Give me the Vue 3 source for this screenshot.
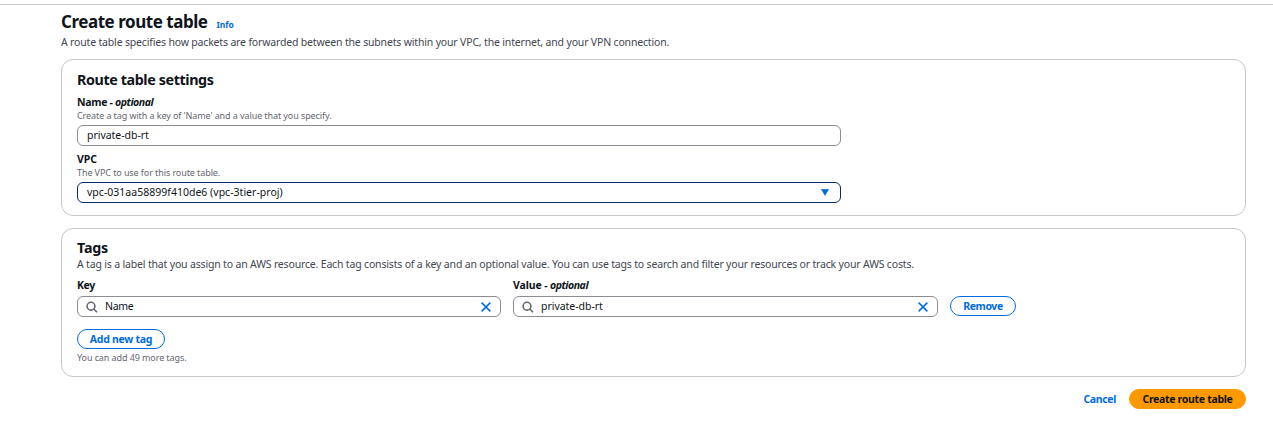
<script setup>
import { ref } from 'vue'

const name = ref('private-db-rt')
const vpc = 'vpc-031aa58899f410de6 (vpc-3tier-proj)'
const tag = ref({ key: 'Name', value: 'private-db-rt' })
</script>

<template>
  <div class="page">
    <header class="page-header">
      <div class="title-row">
        <h1>Create route table</h1>
        <a class="info">Info</a>
      </div>
      <p class="description">A route table specifies how packets are forwarded between the subnets within your VPC, the internet, and your VPN connection.</p>
    </header>

    <section class="card settings">
      <h2>Route table settings</h2>
      <div class="field">
        <label class="label name-label">Name - <i>optional</i></label>
        <p class="hint">Create a tag with a key of 'Name' and a value that you specify.</p>
        <div class="input"><span class="text">{{ name }}</span></div>
      </div>
      <div class="field vpc-field">
        <label class="label vpc-label">VPC</label>
        <p class="hint">The VPC to use for this route table.</p>
        <div class="input select">
          <span class="text vpc-value">{{ vpc }}</span>
          <svg class="caret" width="8" height="7" viewBox="0 0 8 7"><path d="M0.3 0.3h7.4L4 6.4z" fill="#006ce0" stroke="#006ce0" stroke-width=".5" stroke-linejoin="round" /></svg>
        </div>
      </div>
    </section>

    <section class="card tags">
      <h2 class="tags-title">Tags</h2>
      <p class="description">A tag is a label that you assign to an AWS resource. Each tag consists of a key and an optional value. You can use tags to search and filter your resources or track your AWS costs.</p>
      <div class="tag-row">
        <div class="tag-field">
          <label class="label key-label">Key</label>
          <div class="input search">
            <svg class="lens" width="12" height="12" viewBox="0 0 12 12"><circle cx="5" cy="5.2" r="3.9" /><path d="M7.8 8L11 11.2" /></svg>
            <span class="text key-value">{{ tag.key }}</span>
            <svg class="clear" width="10" height="10" viewBox="0 0 10 10"><path d="M.6.6l8.8 8.8M9.4.6L.6 9.4" /></svg>
          </div>
        </div>
        <div class="tag-field value-field">
          <label class="label value-label">Value - <i>optional</i></label>
          <div class="input search">
            <svg class="lens" width="12" height="12" viewBox="0 0 12 12"><circle cx="5" cy="5.2" r="3.9" /><path d="M7.8 8L11 11.2" /></svg>
            <span class="text">{{ tag.value }}</span>
            <svg class="clear" width="10" height="10" viewBox="0 0 10 10"><path d="M.6.6l8.8 8.8M9.4.6L.6 9.4" /></svg>
          </div>
        </div>
        <button class="button remove">Remove</button>
      </div>
      <button class="button add">Add new tag</button>
      <p class="hint">You can add 49 more tags.</p>
    </section>

    <footer class="actions">
      <a class="cancel">Cancel</a>
      <button class="button primary">Create route table</button>
    </footer>
  </div>
</template>

<style>
body {
  background: #fff;
}
</style>

<style scoped>
.page {
  box-sizing: border-box;
  margin-top: 4px;
  height: 435px;
  border-top: 1px solid #c6c6cd;
  padding: 7px 27px 0 61px;
  font: 10.5px/14px "Noto Sans", "Open Sans", sans-serif;
  color: #0f141a;
  overflow: hidden;
}
.page * {
  box-sizing: border-box;
  white-space: nowrap;
}
h1, h2, p {
  margin: 0;
}
.title-row {
  display: flex;
  align-items: baseline;
  height: 23px;
}
h1 {
  width: 155.5px;
  font-size: 17px;
  line-height: 20px;
  letter-spacing: -0.464px;
}
.info {
  color: #006ce0;
  font-size: 8.5px;
  line-height: 12px;
  font-weight: 700;
  letter-spacing: -0.02px;
}
.description {
  color: #424650;
  letter-spacing: -0.172px;
}
.card {
  border: 1px solid #c6c6cd;
  border-radius: 12px;
  padding: 0 15px;
}
.settings {
  height: 157px;
  margin-top: 10px;
  padding-top: 11px;
}
h2 {
  font-size: 14.3px;
  line-height: 18px;
  letter-spacing: -0.39px;
}
.tags-title {
  letter-spacing: -0.2px;
}
.field {
  width: 764px;
  margin-top: 6px;
}
.vpc-field {
  margin-top: 6px;
}
.label {
  display: block;
  font-weight: 700;
  line-height: 14px;
}
.label i {
  letter-spacing: -0.45px;
}
.name-label {
  height: 15px;
  letter-spacing: -0.3px;
}
.vpc-label {
  height: 15px;
}
.value-label {
  letter-spacing: -0.12px;
}
.key-label {
  letter-spacing: -0.45px;
}
.hint {
  color: #656871;
  font-size: 9px;
  line-height: 12px;
  letter-spacing: -0.09px;
}
.input {
  display: flex;
  align-items: center;
  height: 21px;
  border: 1px solid #8c8c94;
  border-radius: 6px;
  padding: 0 9px;
}
.field .input {
  margin-top: 3px;
}
.text {
  padding-bottom: 2px;
  letter-spacing: -0.03px;
}
.select {
  border-color: #002b66;
}
.select .vpc-value {
  letter-spacing: 0.015px;
}
.caret {
  margin-left: auto;
  margin-right: 2px;
  margin-bottom: 1px;
}
.tags {
  height: 149px;
  margin-top: 12px;
  padding-top: 10px;
}
.tag-row {
  display: flex;
  gap: 12px;
  align-items: flex-end;
  margin-top: 7px;
}
.tag-field {
  width: 424px;
}
.value-field {
  width: 425px;
}
.tag-field .input {
  margin-top: 4px;
  padding-left: 8px;
}
.lens {
  margin-right: 7px;
  fill: none;
  stroke: #656871;
  stroke-width: 1.6;
}
.clear {
  margin-left: auto;
  fill: none;
  stroke: #006ce0;
  stroke-width: 1.5;
}
.search .key-value {
  letter-spacing: -0.35px;
}
.button {
  display: flex;
  align-items: center;
  justify-content: center;
  height: 20px;
  border: 1px solid #006ce0;
  border-radius: 10px;
  padding: 0;
  background: #fff;
  color: #006ce0;
  font: 700 10.5px/14px "Noto Sans", "Open Sans", sans-serif;
}
.remove {
  width: 66px;
  margin-bottom: 1px;
  letter-spacing: -0.42px;
}
.add {
  width: 88px;
  margin: 12px 0 3px;
  letter-spacing: -0.28px;
}
.actions {
  display: flex;
  justify-content: flex-end;
  align-items: center;
  gap: 13px;
  margin-top: 12px;
}
.cancel {
  color: #006ce0;
  font-weight: 700;
  letter-spacing: -0.36px;
}
.primary {
  width: 117px;
  border-color: #ff9900;
  background: #ff9900;
  color: #0f141a;
  letter-spacing: -0.31px;
}
</style>
